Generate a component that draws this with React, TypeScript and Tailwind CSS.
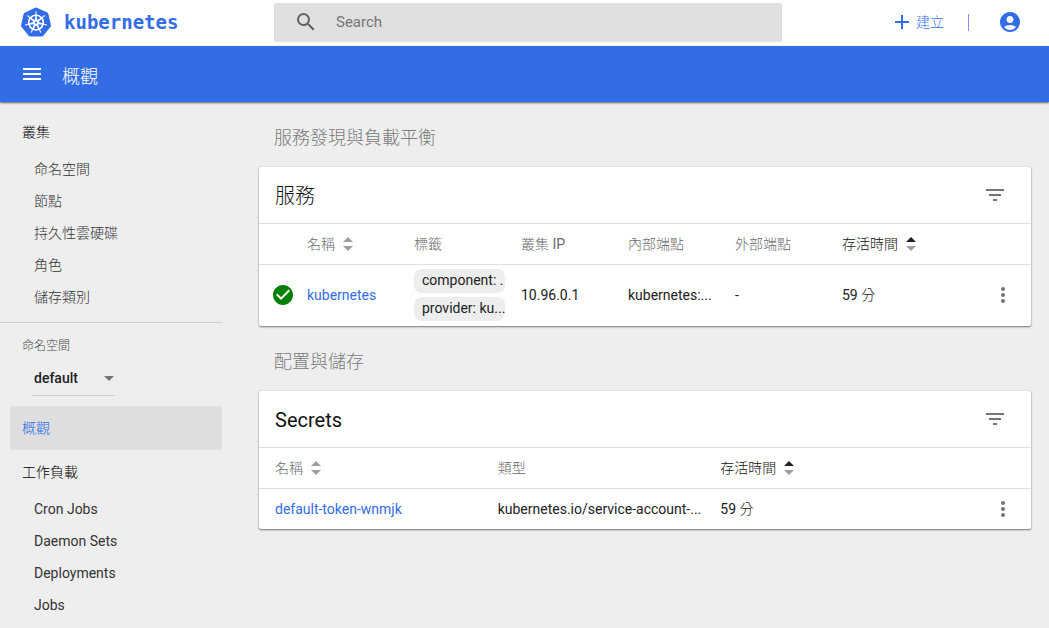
import type { ReactNode } from "react";
import {
  MdAccountCircle,
  MdAdd,
  MdArrowDropDown,
  MdCheckCircle,
  MdFilterList,
  MdMenu,
  MdMoreVert,
  MdSearch,
} from "react-icons/md";
import { SiKubernetes } from "react-icons/si";

const clusterLinks = ["命名空間", "節點", "持久性雲硬碟", "角色", "儲存類別"];
const workloadLinks = ["Cron Jobs", "Daemon Sets", "Deployments", "Jobs"];

function SortIcon({ active = false }: { active?: boolean }) {
  return (
    <svg className="ml-2 h-3.5 w-2.5 shrink-0" viewBox="0 0 10 14" aria-hidden="true">
      <path d="M0 5 5 0l5 5z" fill={active ? "#212121" : "#9e9e9e"} />
      <path d="M0 9l5 5 5-5z" fill="#9e9e9e" />
    </svg>
  );
}

function TopBar() {
  return (
    <header className="flex h-[46px] items-center bg-white pb-0.5">
      <a href="#" className="flex w-[274px] shrink-0 items-center pl-[21px] text-[#326de6]">
        <SiKubernetes size={30} aria-hidden="true" />
        <span className="ml-[13px] font-['DejaVu_Sans_Mono',monospace] text-[19px] leading-6 font-bold">
          kubernetes
        </span>
      </a>
      <label className="flex h-[39px] min-w-0 flex-1 items-center rounded-xs bg-[#e0e0e0] pl-5">
        <MdSearch size={24} className="shrink-0 text-[#616161]" aria-hidden="true" />
        <input
          type="search"
          placeholder="Search"
          aria-label="Search"
          className="ml-[18px] min-w-0 flex-1 bg-transparent text-[15px] outline-none placeholder:text-[#757575]"
        />
      </label>
      <div className="flex w-[267px] shrink-0 items-center justify-end pr-[27px] text-[#326de6]">
        <button type="button" className="flex items-center text-sm">
          <MdAdd size={24} className="mr-0.5" aria-hidden="true" />
          建立
        </button>
        <span className="mx-6 h-[17px] w-px bg-[#9b84ea]" />
        <button type="button" aria-label="Account" className="ml-[5px]">
          <MdAccountCircle size={24} />
        </button>
      </div>
    </header>
  );
}

function ActionBar() {
  return (
    <div className="relative flex h-14 items-center bg-[#326de6] pl-5 text-white shadow-[0_1px_2px_rgba(0,0,0,0.6)]">
      <button type="button" aria-label="Menu">
        <MdMenu size={24} />
      </button>
      <h1 className="ml-[18px] pt-1.5 text-lg">概觀</h1>
    </div>
  );
}

function NavGroup({ title, links }: { title: string; links: string[] }) {
  return (
    <div>
      <a href="#" className="flex h-11 items-center pl-[22px] text-[#000000]">
        {title}
      </a>
      <ul>
        {links.map((link) => (
          <li key={link}>
            <a href="#" className="flex h-8 items-center pb-0.5 pl-[34px] text-[#333333]">
              {link}
            </a>
          </li>
        ))}
      </ul>
    </div>
  );
}

function Sidebar() {
  return (
    <nav className="w-[222px] shrink-0 pt-2 text-sm">
      <NavGroup title="叢集" links={clusterLinks} />
      <div className="mt-2 border-t border-[#cfcfcf] pt-[15px]">
        <label htmlFor="namespace" className="block pl-[22px] text-xs leading-4 text-[#4a4a4a]">
          命名空間
        </label>
        <div className="relative mt-[7px] ml-8 flex h-[35px] w-[83px] items-center border-b border-[#cfcfcf]">
          <select
            id="namespace"
            className="w-full appearance-none bg-transparent pl-0.5 font-medium text-[#212121] outline-none"
          >
            <option>default</option>
          </select>
          <MdArrowDropDown
            size={24}
            className="pointer-events-none absolute -right-1.5 text-[#757575]"
            aria-hidden="true"
          />
        </div>
      </div>
      <a
        href="#"
        aria-current="page"
        className="mt-2.5 ml-2.5 flex h-11 items-center rounded-xs bg-[#dedede] pl-3 text-[#326de6]"
      >
        概觀
      </a>
      <NavGroup title="工作負載" links={workloadLinks} />
    </nav>
  );
}

function Section({ title, children }: { title: string; children: ReactNode }) {
  return (
    <section>
      <h2 className="px-[15px] pt-6 pb-[17px] text-lg leading-6 text-[#7a7a7a]">{title}</h2>
      {children}
    </section>
  );
}

function Card({ title, children }: { title: string; children: ReactNode }) {
  return (
    <div className="rounded-xs bg-white shadow-[0_1px_2px_rgba(0,0,0,0.5),0_0_1px_rgba(0,0,0,0.2)]">
      <div className="flex h-14 items-center justify-between pr-6 pl-4">
        <h3 className="pt-0.5 text-xl text-[#111111]">{title}</h3>
        <button type="button" aria-label="Filter" className="text-[#757575]">
          <MdFilterList size={24} />
        </button>
      </div>
      {children}
    </div>
  );
}

function HeadCell({ children, sort }: { children: string; sort?: "idle" | "active" }) {
  return (
    <th className={sort === "active" ? "font-normal text-[#111111]" : "font-normal text-[#6a6a6a]"}>
      <div className="flex items-center">
        {children}
        {sort && <SortIcon active={sort === "active"} />}
      </div>
    </th>
  );
}

function RowMenu() {
  return (
    <td>
      <button type="button" aria-label="Actions" className="mr-4 ml-auto block text-[#757575]">
        <MdMoreVert size={24} />
      </button>
    </td>
  );
}

function Chip({ children }: { children: string }) {
  return (
    <div className="mr-4 h-6 rounded-lg bg-[#ededed] pl-2 leading-[23px] whitespace-nowrap">
      {children}
    </div>
  );
}

function ServicesTable() {
  return (
    <table className="w-full table-fixed text-left text-sm text-[#212121]">
      <colgroup>
        <col className="w-12" />
        <col />
        <col />
        <col />
        <col />
        <col />
        <col />
        <col className="w-[82px]" />
      </colgroup>
      <thead>
        <tr className="h-[41px] border-t border-[#e0e0e0]">
          <td />
          <HeadCell sort="idle">名稱</HeadCell>
          <HeadCell>標籤</HeadCell>
          <HeadCell>叢集 IP</HeadCell>
          <HeadCell>內部端點</HeadCell>
          <HeadCell>外部端點</HeadCell>
          <HeadCell sort="active">存活時間</HeadCell>
          <td />
        </tr>
      </thead>
      <tbody>
        <tr className="h-[61px] border-t border-[#e0e0e0]">
          <td className="pl-3">
            <MdCheckCircle size={24} className="text-[#008000]" aria-hidden="true" />
          </td>
          <td>
            <a href="#" className="text-[#326de6]">
              kubernetes
            </a>
          </td>
          <td className="py-1">
            <div className="flex flex-col gap-1">
              <Chip>component: .</Chip>
              <Chip>provider: ku...</Chip>
            </div>
          </td>
          <td>10.96.0.1</td>
          <td>kubernetes:...</td>
          <td>-</td>
          <td>59 分</td>
          <RowMenu />
        </tr>
      </tbody>
    </table>
  );
}

function SecretsTable() {
  return (
    <table className="w-full table-fixed text-left text-sm text-[#212121]">
      <colgroup>
        <col className="w-4" />
        <col />
        <col />
        <col />
        <col className="w-[88px]" />
      </colgroup>
      <thead>
        <tr className="h-[41px] border-t border-[#e0e0e0]">
          <td />
          <HeadCell sort="idle">名稱</HeadCell>
          <HeadCell>類型</HeadCell>
          <HeadCell sort="active">存活時間</HeadCell>
          <td />
        </tr>
      </thead>
      <tbody>
        <tr className="h-[41px] border-t border-[#e0e0e0]">
          <td />
          <td>
            <a href="#" className="text-[#326de6]">
              default-token-wnmjk
            </a>
          </td>
          <td className="whitespace-nowrap">kubernetes.io/service-account-...</td>
          <td>59 分</td>
          <RowMenu />
        </tr>
      </tbody>
    </table>
  );
}

export default function App() {
  return (
    <div className="min-h-screen bg-[#eeeeee] font-[Roboto,'Noto_Sans_CJK_TC_Light','Noto_Sans_CJK_TC',sans-serif]">
      <TopBar />
      <ActionBar />
      <div className="flex">
        <Sidebar />
        <main className="min-w-0 flex-1 pr-[18px] pl-[37px]">
          <Section title="服務發現與負載平衡">
            <Card title="服務">
              <ServicesTable />
            </Card>
          </Section>
          <Section title="配置與儲存">
            <Card title="Secrets">
              <SecretsTable />
            </Card>
          </Section>
        </main>
      </div>
    </div>
  );
}
